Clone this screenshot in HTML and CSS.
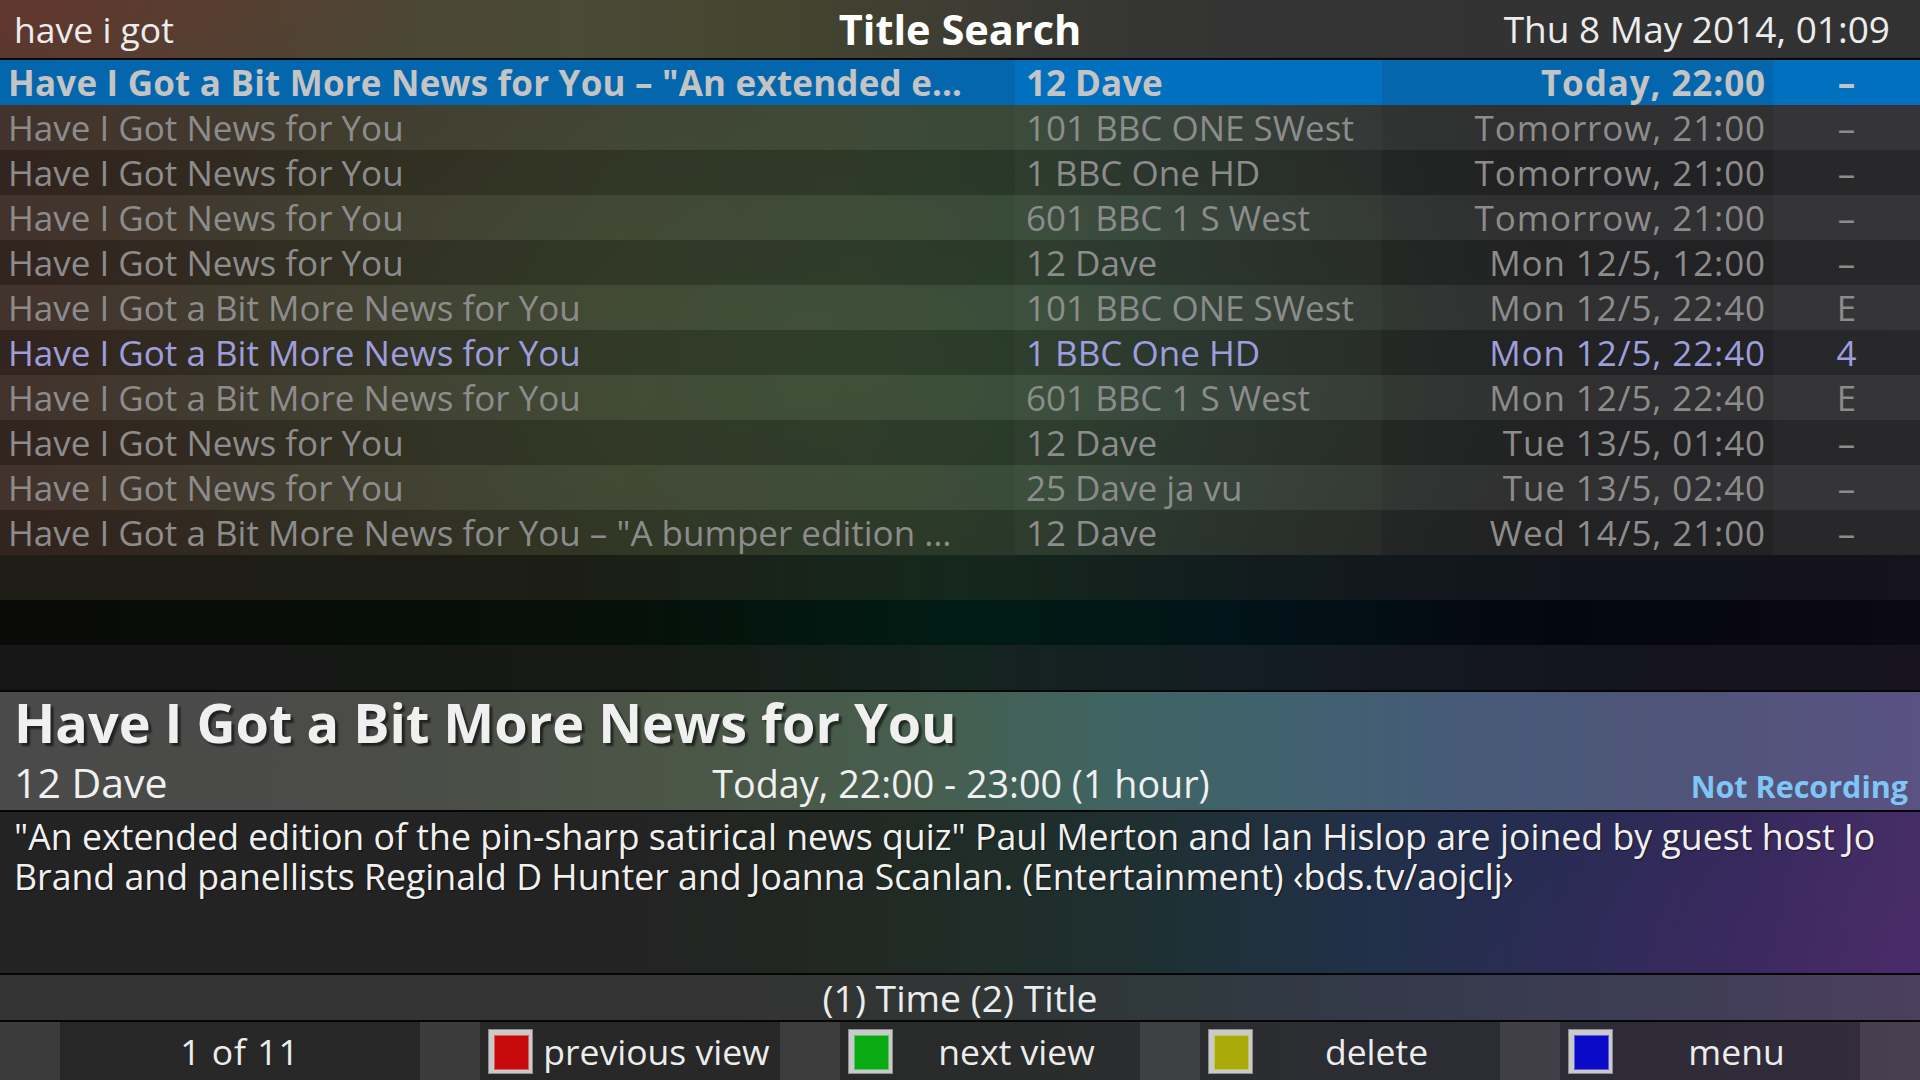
FILE: index.html
```html
<!DOCTYPE html>
<html lang="en">
<head>
<meta charset="utf-8">
<title>Title Search</title>
<link rel="stylesheet" href="styles.css">
</head>
<body>
<div class="screen">
  <header class="topbar">
    <div class="search">have i got</div>
    <div class="title">Title Search</div>
    <div class="clock">Thu 8 May 2014, 01:09</div>
  </header>

  <div class="list">
    <div class="rows">
      <div class="row sel"><span class="c1">Have I Got a Bit More News for You – "An extended e…</span><span class="c2">12 Dave</span><span class="c3">Today, 22:00</span><span class="c4">–</span></div>
      <div class="row"><span class="c1">Have I Got News for You</span><span class="c2">101 BBC ONE SWest</span><span class="c3">Tomorrow, 21:00</span><span class="c4">–</span></div>
      <div class="row"><span class="c1">Have I Got News for You</span><span class="c2">1 BBC One HD</span><span class="c3">Tomorrow, 21:00</span><span class="c4">–</span></div>
      <div class="row"><span class="c1">Have I Got News for You</span><span class="c2">601 BBC 1 S West</span><span class="c3">Tomorrow, 21:00</span><span class="c4">–</span></div>
      <div class="row"><span class="c1">Have I Got News for You</span><span class="c2">12 Dave</span><span class="c3">Mon 12/5, 12:00</span><span class="c4">–</span></div>
      <div class="row"><span class="c1">Have I Got a Bit More News for You</span><span class="c2">101 BBC ONE SWest</span><span class="c3">Mon 12/5, 22:40</span><span class="c4">E</span></div>
      <div class="row rec"><span class="c1">Have I Got a Bit More News for You</span><span class="c2">1 BBC One HD</span><span class="c3">Mon 12/5, 22:40</span><span class="c4">4</span></div>
      <div class="row"><span class="c1">Have I Got a Bit More News for You</span><span class="c2">601 BBC 1 S West</span><span class="c3">Mon 12/5, 22:40</span><span class="c4">E</span></div>
      <div class="row"><span class="c1">Have I Got News for You</span><span class="c2">12 Dave</span><span class="c3">Tue 13/5, 01:40</span><span class="c4">–</span></div>
      <div class="row"><span class="c1">Have I Got News for You</span><span class="c2">25 Dave ja vu</span><span class="c3">Tue 13/5, 02:40</span><span class="c4">–</span></div>
      <div class="row"><span class="c1">Have I Got a Bit More News for You – "A bumper edition …</span><span class="c2">12 Dave</span><span class="c3">Wed 14/5, 21:00</span><span class="c4">–</span></div>
    </div>
    <div class="filler f1"></div>
    <div class="filler f2"></div>
    <div class="filler f3"></div>
  </div>

  <section class="info">
    <div class="info-title">Have I Got a Bit More News for You</div>
    <div class="info-meta">
      <span class="chan">12 Dave</span>
      <span class="when">Today, 22:00 - 23:00 (1 hour)</span>
      <span class="status">Not Recording</span>
    </div>
  </section>

  <section class="desc">
    <p>"An extended edition of the pin-sharp satirical news quiz" Paul Merton and Ian Hislop are joined by guest host Jo<br>Brand and panellists Reginald D Hunter and Joanna Scanlan. (Entertainment) ‹bds.tv/aojclj›</p>
  </section>

  <div class="sortbar">(1) Time (2) Title</div>

  <footer class="buttons">
    <div class="gap"></div>
    <div class="seg"><span class="label count">1 of 11</span></div>
    <div class="gap"></div>
    <div class="seg"><span class="key red"></span><span class="label">previous view</span></div>
    <div class="gap"></div>
    <div class="seg"><span class="key green"></span><span class="label">next view</span></div>
    <div class="gap"></div>
    <div class="seg"><span class="key yellow"></span><span class="label">delete</span></div>
    <div class="gap"></div>
    <div class="seg"><span class="key blue"></span><span class="label">menu</span></div>
    <div class="gap"></div>
  </footer>
</div>
</body>
</html>
```

FILE: styles.css
```css
* { box-sizing: border-box; }

html, body {
  margin: 0;
  padding: 0;
}

body {
  width: 1920px;
  height: 1080px;
  overflow: hidden;
  background: #1e1e1e;
  font-family: "Open Sans", "DejaVu Sans", sans-serif;
}

.screen {
  width: 1920px;
  height: 1080px;
  display: flex;
  flex-direction: column;
}

/* ---------- top bar ---------- */
.topbar {
  flex: none;
  height: 60px;
  border-bottom: 2px solid #050505;
  display: grid;
  grid-template-columns: 1fr auto 1fr;
  align-items: center;
  padding: 0 14px;
  line-height: 58px;
  color: #ececec;
  background:
    radial-gradient(ellipse 420px 110px at 0 0, rgba(120, 50, 40, 0.45), rgba(120, 50, 40, 0) 100%),
    linear-gradient(90deg, #513a31 0%, #4d4434 16%, #4a4a37 30%, #45452f 40%, #3d3d33 50%, #363634 58%, #333333 66%, #323232 100%);
}

.search { font-size: 35.5px; }

.title {
  font-size: 41.5px;
  font-weight: 700;
  color: #ffffff;
}

.clock {
  font-size: 37px;
  text-align: right;
  padding-right: 16px;
}

/* ---------- list ---------- */
.list {
  flex: none;
  height: 630px;
  display: flex;
  flex-direction: column;
}

.rows {
  background:
    radial-gradient(ellipse 760px 360px at 820px 300px, rgba(60, 100, 60, 0.30), rgba(60, 100, 60, 0) 100%),
    linear-gradient(90deg, #3c2c25 0%, #3b3528 18%, #3c3c2b 32%, #36402e 45%, #30402f 52%, #2c3830 60%, #2a2f2c 68%, #29292a 78%, #2a292d 100%);
}

.row {
  height: 45px;
  display: grid;
  grid-template-columns: 1015px 367px 391px 147px;
  font-size: 35px;
  line-height: 45px;
  color: #8c8c8c;
}

.row:nth-child(even) { background: rgba(255, 255, 255, 0.035); }
.row:nth-child(odd) { background: rgba(0, 0, 0, 0.16); }

.row > span {
  white-space: nowrap;
  overflow: hidden;
}

.c1 { padding-left: 8px; }
.c2 { padding-left: 11px; background: rgba(255, 255, 255, 0.025); }
.c3 {
  text-align: right;
  padding-right: 7px;
  letter-spacing: 0.9px;
}
.c4 { text-align: center; background: rgba(255, 255, 255, 0.025); }

.row.sel {
  background: #0467ad;
  color: #c4c4c4;
  font-weight: 700;
}
.row.sel .c1 { letter-spacing: 0.2px; }
.row.sel .c2,
.row.sel .c4 { background: #0070bf; }

.row.rec { color: #9e9ede; }

.filler { height: 45px; flex: none; }
.f1 { background: linear-gradient(90deg, #1e1d16 0%, #1c1e15 30%, #15281d 50%, #121c1e 65%, #12131c 85%, #15131d 100%); }
.f2 { background: linear-gradient(90deg, #0a0a06 0%, #06100a 32%, #001c14 50%, #021419 64%, #05060f 82%, #0b0913 100%); }
.f3 { background: linear-gradient(90deg, #171717 0%, #161916 32%, #14241e 50%, #141d24 65%, #14141e 84%, #17141f 100%); }

/* ---------- programme info ---------- */
.info {
  flex: none;
  height: 122px;
  border-top: 2px solid #060606;
  border-bottom: 2px solid #060606;
  padding: 0 12px 0 14px;
  color: #f0f0f0;
  background:
    linear-gradient(90deg, #4a4a4a 0%, #4b4c48 20%, #4b5646 35%, #465e4e 48%, #3f6462 58%, #40626e 66%, #465a78 76%, #4f5578 87%, #5a5282 100%);
}

.info-title {
  font-size: 54px;
  font-weight: 700;
  line-height: 61px;
  text-shadow: 3px 3px 2px rgba(0, 0, 0, 0.55);
}

.info-meta {
  margin-top: 5px;
  display: grid;
  grid-template-columns: 1fr auto 1fr;
  align-items: baseline;
  line-height: 48px;
}

.chan { font-size: 41px; }
.when { font-size: 37.7px; }
.status {
  font-size: 30.5px;
  font-weight: 700;
  color: #7fc6f6;
  text-align: right;
}

/* ---------- description ---------- */
.desc {
  flex: none;
  height: 161px;
  padding: 4px 15px 0 14px;
  color: #f0f0f0;
  background:
    radial-gradient(ellipse 520px 200px at 1920px 161px, rgba(80, 40, 110, 0.45), rgba(80, 40, 110, 0) 100%),
    linear-gradient(90deg, #232323 0%, #232323 32%, #222823 44%, #1f2e29 53%, #1f3035 61%, #213048 71%, #262c52 81%, #33295a 91%, #452e66 100%);
}

.desc p {
  margin: 0;
  font-size: 35.7px;
  line-height: 40px;
  white-space: nowrap;
  text-shadow: 1px 1px 1px rgba(0, 0, 0, 0.5);
}

/* ---------- sort bar ---------- */
.sortbar {
  flex: none;
  height: 49px;
  border-top: 2px solid #060606;
  border-bottom: 2px solid #060606;
  text-align: center;
  font-size: 37.3px;
  line-height: 45px;
  color: #ececec;
  background: linear-gradient(90deg, #333333 0%, #333333 38%, #313535 50%, #2f383b 60%, #343a4a 72%, #3c3c54 84%, #4b405e 100%);
}

/* ---------- buttons ---------- */
.buttons {
  flex: none;
  height: 58px;
  display: grid;
  grid-template-columns: 60px 360px 60px 300px 60px 300px 60px 300px 60px 300px 60px;
  background: linear-gradient(90deg, #272727 0%, #282828 40%, #2a2c2c 55%, #2b2d33 72%, #2f2b37 88%, #352c3d 100%);
  color: #ececec;
}

.gap { background: rgba(255, 255, 255, 0.095); }

.seg {
  display: flex;
  align-items: center;
}

.label {
  flex: 1;
  text-align: center;
  font-size: 35.5px;
  line-height: 58px;
  white-space: nowrap;
}

.label.count { letter-spacing: 1px; }

.key {
  flex: none;
  width: 45px;
  height: 45px;
  margin-left: 8px;
  padding: 5px;
  background: #cacaca;
  border: 1px solid #8c8c8c;
}

.key::before {
  content: "";
  display: block;
  width: 100%;
  height: 100%;
  background: var(--key);
  border: 1px solid rgba(255, 255, 255, 0.35);
}

.red { --key: #c80a0c; }
.green { --key: #0aaa14; }
.yellow { --key: #aaaa0a; }
.blue { --key: #0a0ac8; }
```
